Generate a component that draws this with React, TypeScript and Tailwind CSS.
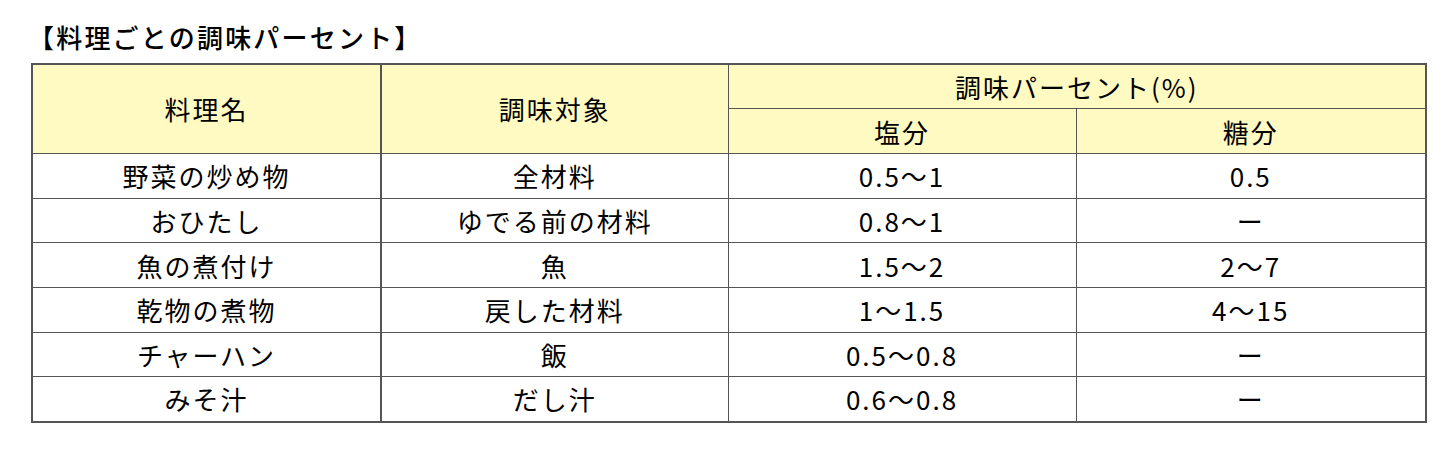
const rows = [
  { name: '野菜の炒め物', target: '全材料', salt: '0.5～1', sugar: '0.5' },
  { name: 'おひたし', target: 'ゆでる前の材料', salt: '0.8～1', sugar: 'ー' },
  { name: '魚の煮付け', target: '魚', salt: '1.5～2', sugar: '2～7' },
  { name: '乾物の煮物', target: '戻した材料', salt: '1～1.5', sugar: '4～15' },
  { name: 'チャーハン', target: '飯', salt: '0.5～0.8', sugar: 'ー' },
  { name: 'みそ汁', target: 'だし汁', salt: '0.6～0.8', sugar: 'ー' },
];

const cell = 'border border-[#555] text-center align-middle h-[44.7px] p-0 font-normal';
const txt = `${cell} tracking-[2px]`;

export default function App() {
  return (
    <div
      className="w-[1456px] h-[451px] bg-white pt-[18px] pl-[31px] text-black"
      style={{ fontFamily: '"Noto Sans CJK JP", "Noto Sans", sans-serif' }}
    >
      <div className="text-[26px] font-medium leading-[37px] tracking-[2.2px] -ml-[3px] mb-[8px]">【料理ごとの調味パーセント】</div>
      <table className="w-[1394px] table-fixed border-collapse border-2 border-[#555] text-[26px] font-medium">
        <colgroup>
          <col className="w-[349px]" />
          <col className="w-[347px]" />
          <col className="w-[348px]" />
          <col className="w-[350px]" />
        </colgroup>
        <thead>
          <tr className="bg-[#fff9c2]">
            <th rowSpan={2} className={`${txt} border-r-2`}>料理名</th>
            <th rowSpan={2} className={txt}>調味対象</th>
            <th colSpan={2} className={txt}>調味パーセント(%)</th>
          </tr>
          <tr className="bg-[#fff9c2]">
            <th className={txt}>塩分</th>
            <th className={txt}>糖分</th>
          </tr>
        </thead>
        <tbody>
          {rows.map((r) => (
            <tr key={r.name}>
              <td className={`${txt} border-r-2`}>{r.name}</td>
              <td className={txt}>{r.target}</td>
              <td className={txt}>{r.salt}</td>
              <td className={txt}>{r.sugar}</td>
            </tr>
          ))}
        </tbody>
      </table>
    </div>
  );
}
